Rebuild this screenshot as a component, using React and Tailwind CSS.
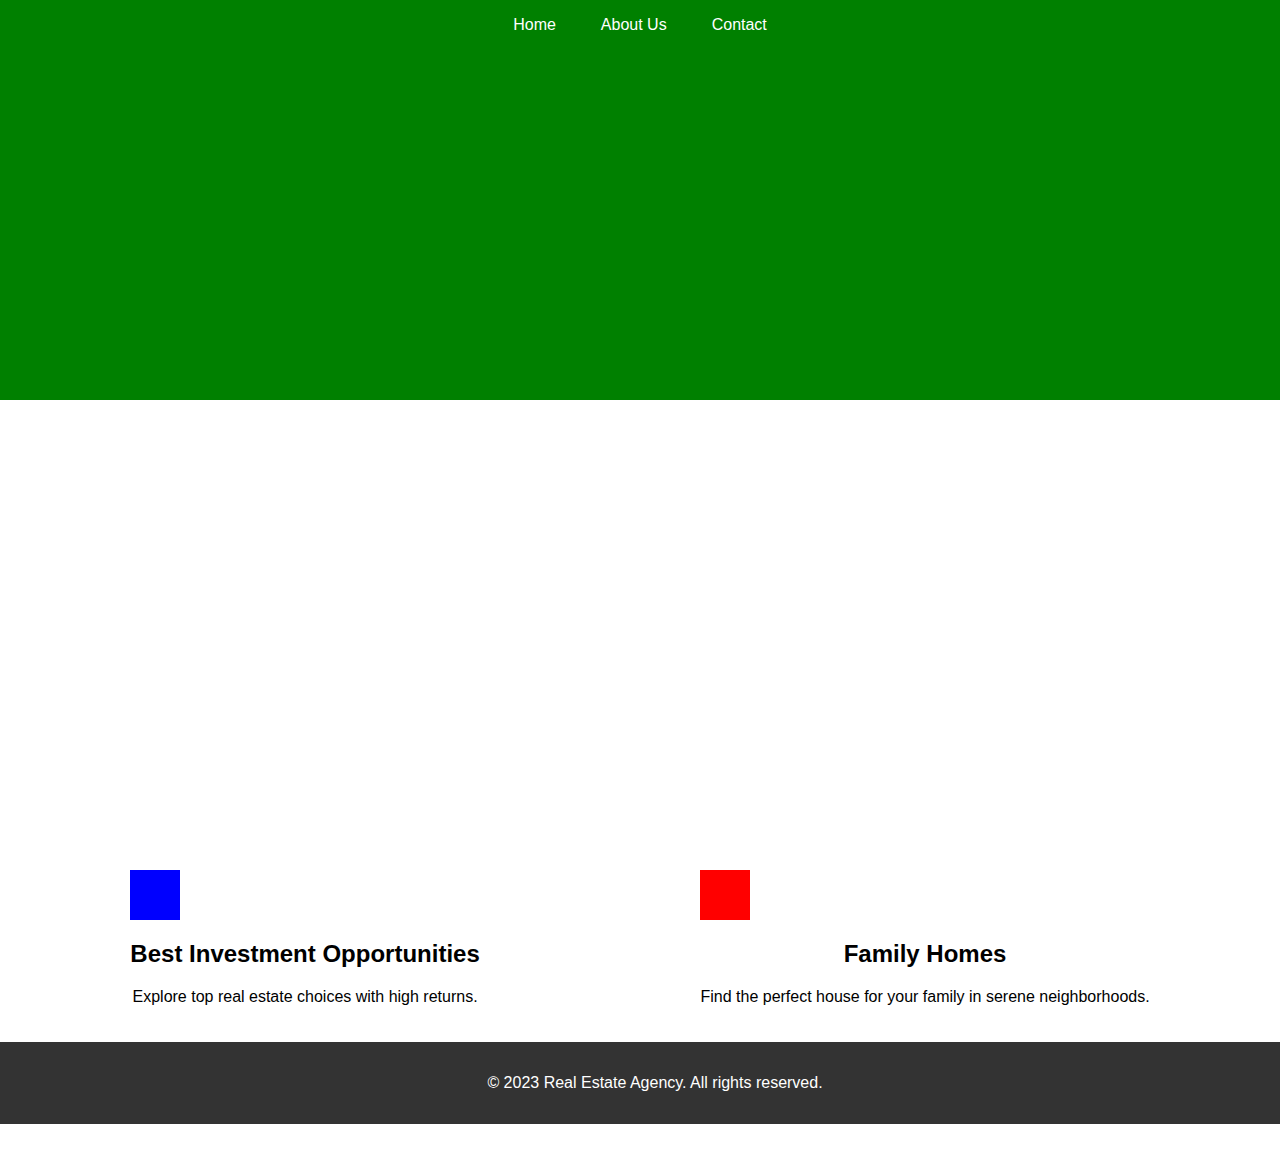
import React from 'react';

const cards = [
  { color: 'bg-[#0000ff]', title: 'Best Investment Opportunities', text: 'Explore top real estate choices with high returns.' },
  { color: 'bg-[#ff0000]', title: 'Family Homes', text: 'Find the perfect house for your family in serene neighborhoods.' },
];

const App = () => {
  return (
    <div className="font-['Liberation_Sans',Arial,sans-serif] text-black bg-white">
      <header className="bg-[#008000] h-[400px]">
        <nav className="flex justify-center gap-[45px] pt-4 text-white text-base leading-[18px]">
          <a href="#">Home</a>
          <a href="#">About Us</a>
          <a href="#">Contact</a>
        </nav>
      </header>

      <section className="h-[450px]"></section>

      <section className="flex justify-around px-5">
        {cards.map(card => (
          <div key={card.title} className="p-5 text-center">
            <div className={`w-[50px] h-[50px] ${card.color}`}></div>
            <h2 className="mt-[20px] text-2xl font-bold leading-[28px]">{card.title}</h2>
            <p className="mt-[20px] mb-4 text-base leading-[18px]">{card.text}</p>
          </div>
        ))}
      </section>

      {/* footer is full width plus its side padding, so the page scrolls sideways */}
      <footer className="box-content w-full px-[15px] bg-[#333333] text-white text-center py-8 leading-[18px]">
        <p>&copy; 2023 Real Estate Agency. All rights reserved.</p>
      </footer>
    </div>
  );
};

export default App;
